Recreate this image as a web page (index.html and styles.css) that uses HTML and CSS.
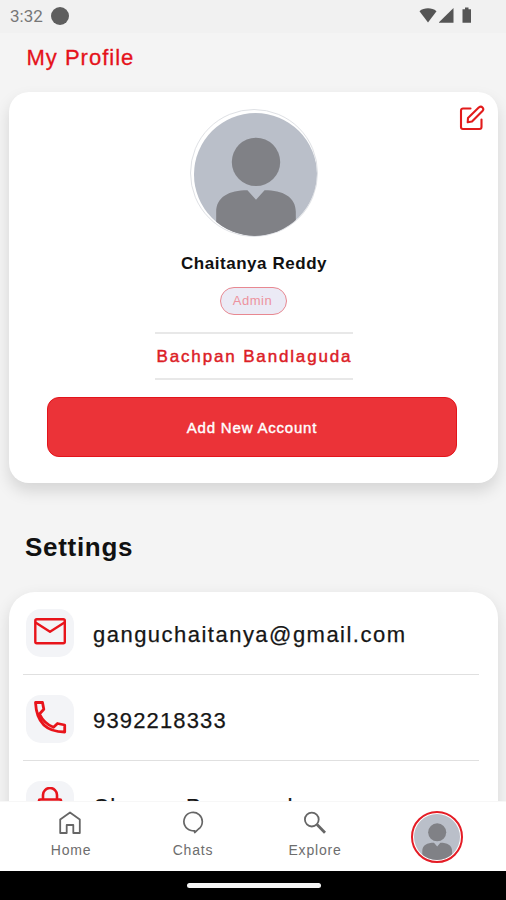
FILE: index.html
```html
<!DOCTYPE html>
<html lang="en">
<head>
<meta charset="utf-8">
<title>My Profile</title>
<link rel="stylesheet" href="styles.css">
</head>
<body>
<svg class="defs" width="0" height="0" aria-hidden="true">
  <symbol id="person" viewBox="0 0 122 122">
    <rect width="122" height="122" fill="#babfc9"/>
    <circle cx="61.500" cy="48.500" r="24" fill="#808186"/>
    <path d="M22 122V98C22 83 35 76.500 53 76.500L61.500 86L70 76.500C88 76.500 101 83 101 98V122Z" fill="#808186"/>
  </symbol>
</svg>
<div class="screen">
  <header class="status">
    <span class="time">3:32</span><span class="dot"></span>
    <svg class="signals" width="54" height="18" viewBox="0 0 54 18">
      <path d="M0.500 4.200C5 .4 13 .4 17.500 4.200L9 15.500Z" fill="#555"/>
      <path d="M20 15.800V15.300L34.500 1V15.800Z" fill="#555"/>
      <path d="M43.500 2.200H46V.5H49.500V2.200H52V15.800H43.500Z" fill="#555"/>
    </svg>
  </header>
  <main class="content">
    <h1 class="title">My Profile</h1>
    <section class="card profile">
      <svg class="edit" width="26" height="26" viewBox="0 0 26 26" fill="none" stroke="#e21b1b" stroke-width="2.100" stroke-linejoin="round" stroke-linecap="round">
        <path d="M11.500 3.500H4A2 2 0 0 0 2 5.500V22A2 2 0 0 0 4 24H20.500A2 2 0 0 0 22.500 22V14.500"/>
        <path d="M9 13L20 2.300Q22 1 23.500 2.500Q25 4 23.700 5.700L13 16.500L8.700 17.300Z"/>
      </svg>
      <div class="avatar"><svg width="123" height="123"><use href="#person"/></svg></div>
      <div class="name">Chaitanya Reddy</div>
      <div class="role">Admin</div>
      <div class="school">Bachpan Bandlaguda</div>
      <button class="add">Add New Account</button>
    </section>
    <h2 class="heading">Settings</h2>
    <section class="card settings">
      <div class="row">
        <span class="tile"><svg width="34" height="34" viewBox="0 0 34 34" fill="none" stroke="#e8141b" stroke-width="2.400" stroke-linejoin="round"><rect x="2.300" y="4.300" width="29.500" height="24" rx="1.500"/><path d="M2.500 7.500L17 16.800L31.500 7.500"/></svg></span>
        <span class="email">ganguchaitanya@gmail.com</span>
      </div>
      <div class="row">
        <span class="tile"><svg width="34" height="34" viewBox="0 0 34 34" fill="none" stroke="#e8141b" stroke-width="2.800" stroke-linejoin="round"><path d="M2.500 1.500H9.500L10.800 8.200L6.500 13Q11 22.500 20.500 26.300L24.500 22.500L31.700 24V31Q4 31 2.500 1.500Z"/></svg></span>
        <span class="phone">9392218333</span>
      </div>
      <div class="row">
        <span class="tile"><svg width="34" height="34" viewBox="0 0 34 34" fill="none" stroke="#e8141b" stroke-width="2.600"><path d="M10 12.500V8A7 7 0 0 1 24 8V12.500"/><rect x="6" y="12.500" width="22" height="19" rx="1"/></svg></span>
        <span class="password">Change Password</span>
      </div>
    </section>
  </main>
  <nav class="tabs">
    <div class="tab">
      <svg width="24" height="24" viewBox="0 0 24 24" fill="none" stroke="#666" stroke-width="1.800" stroke-linejoin="round"><path d="M2.200 8.500L12 1.500L21.800 8.500V22H15.300V14H8.700V22H2.200Z"/></svg>
      <span>Home</span>
    </div>
    <div class="tab">
      <svg width="24" height="24" viewBox="0 0 24 24" fill="none" stroke="#666" stroke-width="1.700" stroke-linejoin="round"><path d="M10 19.500A9.200 9.200 0 1 1 17.500 18Q15.500 20 13.700 21.500V19.800Q12 20 10 19.500Z"/></svg>
      <span>Chats</span>
    </div>
    <div class="tab">
      <svg width="24" height="24" viewBox="0 0 24 24" fill="none" stroke="#666" stroke-width="1.800"><circle cx="8.800" cy="8.600" r="6.900"/><path d="M14 13.500L22 21.800" stroke-width="2.800"/></svg>
      <span>Explore</span>
    </div>
    <div class="tab"><div class="me"><svg width="46" height="46"><use href="#person"/></svg></div></div>
  </nav>
  <footer class="gesture"><span></span></footer>
</div>
</body>
</html>
```

FILE: styles.css
```css
* { box-sizing: border-box; }
body { margin: 0; font-family: "Liberation Sans", Arial, sans-serif; }
svg { display: block; flex: none; }
.defs { position: absolute; }
.screen { width: 506px; height: 900px; display: flex; flex-direction: column; overflow: hidden; background: #f4f4f4; }
.status { height: 33px; flex: none; display: flex; align-items: center; padding: 0 33px 2px 10px; background: #f1f1f1; }
.time { width: 41px; font-family: Roboto, sans-serif; font-size: 17px; color: #777; }
.dot { width: 18px; height: 18px; border-radius: 50%; background: #5e5e5e; }
.signals { margin-left: auto; }
.content { flex: 1; min-height: 0; overflow: hidden; padding: 0 8px 0 9px; }
.title { margin: 0; height: 59px; padding: 11px 0 0 17.5px; font-size: 22px; line-height: 28px; font-weight: 400; letter-spacing: 1px; color: #e5121b; -webkit-text-stroke: .3px; }
.card { background: #fff; border-radius: 20px; }
.profile { position: relative; height: 391px; padding-top: 17px; display: flex; flex-direction: column; align-items: center; box-shadow: 0 8px 16px rgba(0,0,0,.13); }
.edit { position: absolute; top: 13px; right: 13px; }
.avatar { width: 128px; height: 128px; border-radius: 50%; border: 1.5px solid #dfe1e5; padding: 3px 0 0 3px; overflow: hidden; }
.avatar svg { border-radius: 50%; }
.name { margin: 16px 0 0 1px; line-height: 22px; font-size: 17px; font-weight: 700; letter-spacing: .55px; color: #111; }
.role { width: 67px; height: 28px; margin: 12px 0 0; border: 1.5px solid #e88891; border-radius: 14px; background: #ebeaf5; text-align: center; line-height: 25px; padding-right: 2px; font-size: 13px; letter-spacing: .5px; color: #ed929e; }
.school { width: 198px; height: 48px; margin: 17px 0 0; padding-left: 2px; border: solid #e8e8e8; border-width: 2px 0; line-height: 46px; font-size: 17px; letter-spacing: 1.85px; white-space: nowrap; color: #dc2026; -webkit-text-stroke: .45px; }
.add { width: 410px; height: 60px; margin: 17px 3px 0 0; padding: 0; border: 1.5px solid #e3141b; border-radius: 12px; background: #eb3338; color: #fff; font: 15px "Liberation Sans", Arial, sans-serif; letter-spacing: .8px; -webkit-text-stroke: .4px; }
.heading { margin: 0; height: 109px; padding: 48px 0 0 16px; line-height: 32px; font-size: 26px; letter-spacing: .7px; color: #111; }
.settings { height: 300px; border-radius: 26px 26px 0 0; padding: 0 19px 0 14px; box-shadow: 0 6px 16px rgba(0,0,0,.12); }
.row { height: 86px; display: flex; align-items: center; gap: 19px; padding: 3px 0 0 3px; border-bottom: 1px solid #e0e0e0; font-size: 22px; color: #161616; -webkit-text-stroke: .25px; }
.row:first-child { height: 83px; padding-top: 0; }
.tile { width: 48px; height: 48px; border-radius: 15px; background: #f3f4f7; display: flex; justify-content: center; padding-top: 6px; }
.email { letter-spacing: 1.48px; padding-top: 3px; }
.phone { letter-spacing: 1.15px; padding-top: 3px; }
.password { letter-spacing: 1.4px; padding-top: 3px; }
.tabs { height: 70px; flex: none; display: flex; padding-left: 10px; background: #fff; border-top: 1px solid #f7f7f7; }
.tab { width: 122px; display: flex; flex-direction: column; align-items: center; padding-top: 9px; }
.tab:first-child svg { margin-right: 2px; }
.tab span { margin-top: 6px; font-size: 14px; line-height: 18px; letter-spacing: .8px; color: #6d6d6d; }
.me { width: 52px; height: 52px; border: 2px solid #e41c25; border-radius: 50%; padding: 1px; background: #fff; }
.me svg { border-radius: 50%; }
.gesture { height: 29px; flex: none; background: #000; display: flex; justify-content: center; padding-top: 12px; }
.gesture span { width: 134px; height: 5px; margin-left: 2px; border-radius: 3px; background: #f5f5f5; }
```
